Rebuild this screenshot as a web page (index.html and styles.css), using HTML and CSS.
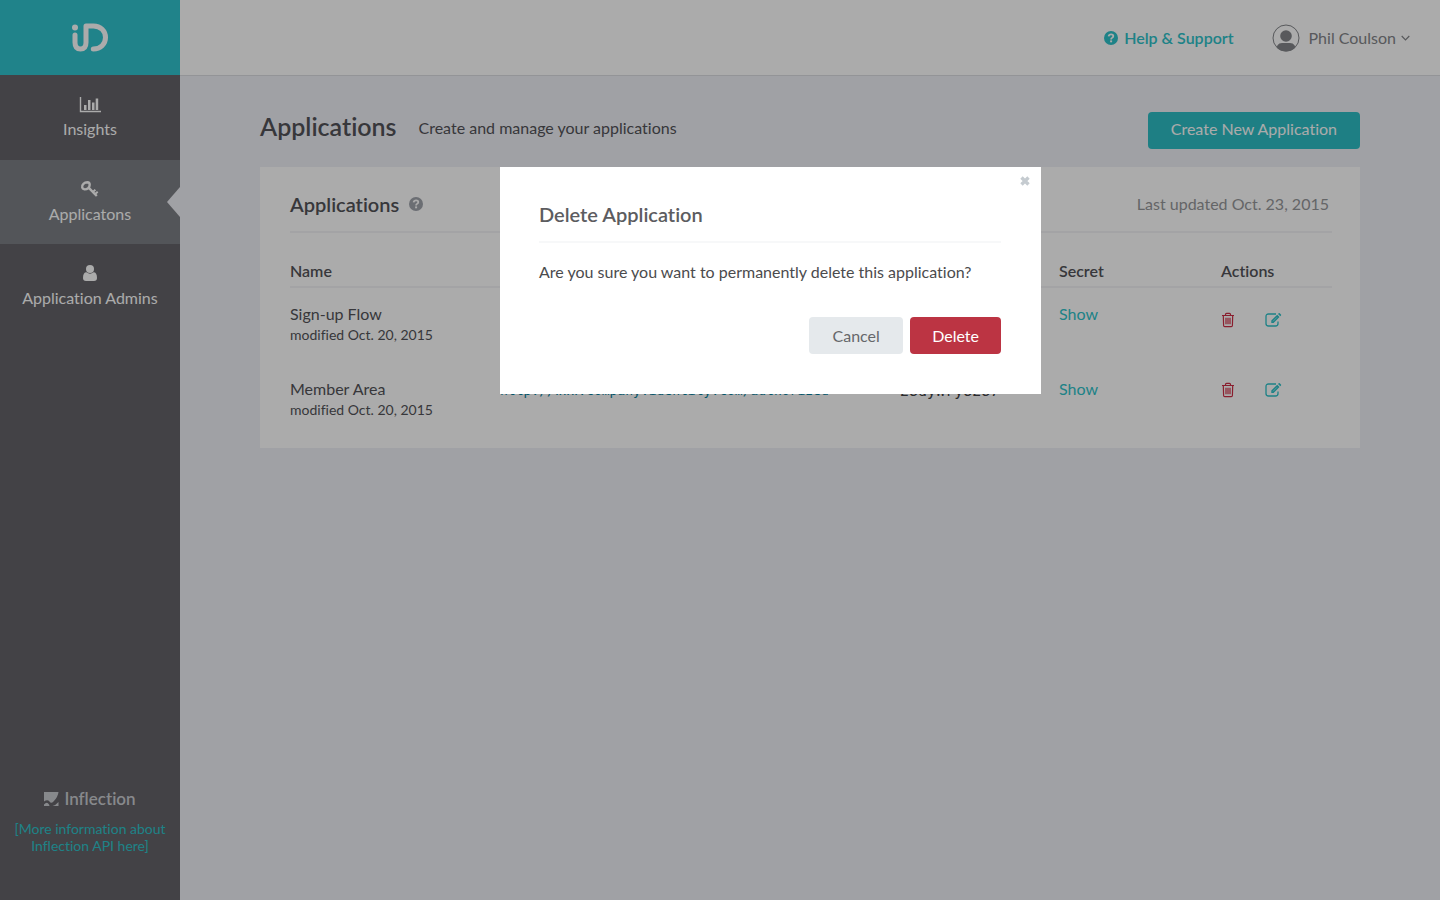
FILE: index.html
```html
<!DOCTYPE html>
<html lang="en">
<head>
<meta charset="utf-8">
<meta name="viewport" content="width=device-width, initial-scale=1">
<title>Applications</title>
<link rel="stylesheet" href="styles.css">
</head>
<body>
<svg class="defs" aria-hidden="true">
  <symbol id="trash" viewBox="0 0 14 16"><path d="M1 3.500h12M4.500 3.200V2.400Q4.500 1.300 5.500 1.300h3Q9.500 1.300 9.500 2.400v.8M2.300 3.700l.3 9.800q.1 1.200 1.100 1.200h6.600q1 0 1.100-1.200l.3-9.800M5 5.800v6.400M7 5.800v6.400M9 5.800v6.400" fill="none" stroke="currentColor" stroke-width="1.200"/></symbol>
  <symbol id="edit" viewBox="0 0 17 16"><path d="M11 2H3.500Q1 2 1 4.500v7Q1 14 3.500 14h7Q13 14 13 11.500V9.500" fill="none" stroke="currentColor" stroke-width="1.300"/><path d="M12.200 2.700l2.300 2.300-5.900 6H6.300V8.600zM13 1.900l.7-.7q.5-.4 1 0l1.300 1.300q.4.500 0 1l-.7.700z" fill="currentColor"/><path d="M8 9.300l4-4" stroke="#fff" stroke-width=".5"/></symbol>
  <symbol id="help" viewBox="0 0 14 14"><circle cx="7" cy="7" r="7" fill="currentColor"/><path d="M4.600 5.400Q5 3.300 7.100 3.300q2.200 0 2.200 1.800 0 1.100-1.100 1.700Q7.100 7.300 7.100 8.500" fill="none" stroke="#fff" stroke-width="1.800"/><path d="M6.100 9.400H8.100v1.900H6.100z" fill="#fff"/></symbol>
</svg>
<div class="app">
  <aside class="sidebar">
    <a class="brand" href="#" aria-label="iD home">
      <svg width="38" height="32" viewBox="0 0 38 32"><circle cx="4" cy="5.500" r="3" fill="#fff"/><path d="M4 13v7.500q0 6.500 5.500 6.500t5.500-6.500V4h7.500c7 0 12 5 12 11.500S29.500 27 22.300 27" fill="none" stroke="#fff" stroke-width="5" stroke-linecap="round" stroke-linejoin="round"/></svg>
    </a>
    <nav class="nav">
      <a class="nav-item" href="#">
        <svg width="22" height="18" viewBox="0 0 22 18"><path d="M1.500 2v14.500H22" fill="none" stroke="#fff" stroke-width="1.400"/><path d="M5 10h2.500v5H5zM9 5h2.500v10H9zM13 7.500h2.500V15H13zM16.700 3.500h2.500V15h-2.500z" fill="#fff"/></svg>
        <span>Insights</span>
      </a>
      <a class="nav-item active" href="#">
        <svg width="22" height="18" viewBox="0 0 22 18"><g fill="none" stroke="#fff"><path d="M3.200 7.500Q2.700 5.500 4.400 3.900 6 2.300 8.300 2.300q2.400.2 2.400 2.400 0 2.100-1.600 3.500Q7.500 9.500 5.400 9.300 3.500 9 3.200 7.500z" stroke-width="2.400"/><path d="M9.600 7.700l8.200 8.300" stroke-width="2.400"/><path d="M13.500 12.300l2.900-2.500m-.9 4.600l3.200-2.700" stroke-width="2"/></g></svg>
        <span>Applicatons</span>
      </a>
      <a class="nav-item" href="#">
        <svg width="22" height="18" viewBox="0 0 22 18"><circle cx="11" cy="5" r="4" fill="#fff"/><path d="M7.500 8.300Q4 8.300 4 14q0 3 3 3h8q3 0 3-3 0-5.700-3.500-5.700-3.500 2.800-7 0z" fill="#fff"/></svg>
        <span>Application Admins</span>
      </a>
    </nav>
    <footer class="sidebar-footer">
      <div class="inflection"><svg width="15" height="14" viewBox="0 0 15 14"><path d="M0 0h14.500Q14 5 9.500 9.500 7 12 5.500 9.500 3.500 7 0 9.500z M0 14v-1.500q3-3.500 5 0L5.500 14zM8.500 14q3.500-1 6-4v4z" fill="currentColor"/></svg><span>Inflection</span></div>
      <a href="#">[More information about Inflection API here]</a>
    </footer>
  </aside>
  <div class="main">
    <header class="topbar">
      <a class="help-link" href="#"><svg width="14" height="14"><use href="#help"/></svg>Help &amp; Support</a>
      <button class="user" type="button">
        <svg width="28" height="28" viewBox="0 0 28 28"><clipPath id="face"><circle cx="14" cy="14" r="13.500"/></clipPath><circle cx="14" cy="14" r="13" fill="none" stroke="currentColor"/><circle cx="14" cy="12" r="5.800" fill="currentColor"/><path clip-path="url(#face)" d="M4 28q0-9 6-9h8q6 0 6 9z" fill="currentColor"/></svg>
        <span>Phil Coulson</span>
        <svg class="caret" width="9" height="6" viewBox="0 0 9 6"><path d="M.7 1l3.800 3.800L8.300 1" fill="none" stroke="currentColor" stroke-width="1.200"/></svg>
      </button>
    </header>
    <main class="content">
      <div class="page-head">
        <h1>Applications</h1>
        <p>Create and manage your applications</p>
        <button class="btn create" type="button">Create New Application</button>
      </div>
      <section class="card">
        <div class="card-head">
          <h2>Applications</h2>
          <svg width="14" height="14" role="img" aria-label="Help"><use href="#help"/></svg>
          <span class="updated">Last updated Oct. 23, 2015</span>
        </div>
        <table>
          <colgroup><col class="c-name"><col class="c-url"><col class="c-key"><col class="c-secret"><col></colgroup>
          <thead><tr><th>Name</th><th></th><th></th><th>Secret</th><th>Actions</th></tr></thead>
          <tbody>
            <tr>
              <td>Sign-up Flow<small>modified Oct. 20, 2015</small></td>
              <td></td>
              <td></td>
              <td><a href="#">Show</a></td>
              <td><div class="actions low"><button class="icon danger" type="button" aria-label="Delete Sign-up Flow"><svg width="14" height="16"><use href="#trash"/></svg></button><button class="icon" type="button" aria-label="Edit Sign-up Flow"><svg width="17" height="16"><use href="#edit"/></svg></button></div></td>
            </tr>
            <tr>
              <td>Member Area<small>modified Oct. 20, 2015</small></td>
              <td><a class="code url" href="#">http://www.company.identity.com/authorized</a></td>
              <td><span class="code key">28dyWry8287</span></td>
              <td><a href="#">Show</a></td>
              <td><div class="actions"><button class="icon danger" type="button" aria-label="Delete Member Area"><svg width="14" height="16"><use href="#trash"/></svg></button><button class="icon" type="button" aria-label="Edit Member Area"><svg width="17" height="16"><use href="#edit"/></svg></button></div></td>
            </tr>
          </tbody>
        </table>
      </section>
    </main>
  </div>
</div>
<div class="overlay">
  <div class="modal" role="dialog" aria-modal="true" aria-labelledby="dialog-title">
    <button class="close" type="button" aria-label="Close"><svg width="10" height="10" viewBox="0 0 10 10"><path d="M1.500 1.500l7 7m0-7l-7 7" stroke="currentColor" stroke-width="3.400"/></svg></button>
    <h2 id="dialog-title">Delete Application</h2>
    <p>Are you sure you want to permanently delete this application?</p>
    <div class="modal-actions"><button class="btn cancel" type="button">Cancel</button><button class="btn delete" type="button">Delete</button></div>
  </div>
</div>
</body>
</html>
```
FILE: styles.css
```css
* { box-sizing: border-box; }
body {
  margin: 0;
  background: #eff0f6;
  color: #535358;
  font: 16px/20px Lato, "Open Sans", sans-serif;
  font-variant-ligatures: none;
}
h1, h2, p { margin: 0; font-weight: 600; }
p { font-weight: 400; }
a { color: #2ec2c9; text-decoration: none; }
button { font: inherit; color: inherit; border: 0; padding: 0; background: none; cursor: pointer; }
svg { display: block; flex: none; }
.defs { position: absolute; width: 0; height: 0; }

.app { display: flex; min-height: 100vh; }
.sidebar { width: 180px; flex: none; display: flex; flex-direction: column; background: #646369; }
.brand { height: 75px; display: flex; align-items: center; justify-content: center; background: #31c4ce; }
.nav-item {
  display: flex; flex-direction: column; align-items: center; gap: 6px;
  padding: 20px 0; height: 85px; color: #fff; position: relative;
}
.nav-item.active { height: 84px; background: #7d7f85; }
.nav-item.active::after {
  content: ""; position: absolute; right: 0; top: 27px;
  border: solid transparent; border-width: 15px 13px 15px 0; border-right-color: #eff0f6;
}
.sidebar-footer { margin-top: auto; padding: 0 10px 46px; text-align: center; font-size: 14px; line-height: 17px; }
.inflection { display: flex; align-items: center; justify-content: center; gap: 5px; margin-bottom: 11px; color: #caccd1; font-size: 17px; line-height: 20px; font-weight: 600; }

.main { flex: 1; min-width: 0; }
.topbar { height: 76px; display: flex; justify-content: flex-end; align-items: center; gap: 38px; padding-right: 30px; background: #fff; border-bottom: 1px solid #dcdde2; }
.help-link { display: flex; align-items: center; gap: 6px; font-weight: 600; }
.user { display: flex; align-items: center; gap: 9px; color: #838589; }
.caret { margin-left: -4px; }

.content { padding: 36px 80px; }
.page-head { display: flex; align-items: flex-start; margin-bottom: 18px; }
h1 { font-size: 25px; line-height: 28px; margin-right: 22px; }
.page-head p { line-height: 32px; }
.btn { height: 37px; border-radius: 4px; padding: 0 22px; }
.create { margin-left: auto; padding: 0 23px 4px; background: #2ebec5; color: #fff; }

.card { background: #fff; padding: 26px 28px 0 30px; min-height: 281px; }
.card-head { display: flex; align-items: center; gap: 10px; padding-bottom: 16px; border-bottom: 2px solid #f4f4f7; color: #a0a4ac; }
h2 { font-size: 20px; line-height: 22px; color: #535358; }
.updated { margin-left: auto; padding-right: 3px; color: #96979a; }
table { width: 100%; margin-top: 28px; border-collapse: collapse; table-layout: fixed; }
.c-name { width: 210px; }
.c-url { width: 400px; }
.c-key { width: 159px; }
.c-secret { width: 162px; }
th { text-align: left; font-weight: 600; padding: 0 0 5px; border-bottom: 2px solid #f4f4f7; }
td { height: 76px; padding: 16px 0 0; vertical-align: top; }
small { display: block; font-size: 14px; line-height: 22px; }
.code { display: block; font-family: "DejaVu Sans Mono", monospace; font-size: 13px; line-height: 24px; color: #404044; }
.url { color: #067f9e; }
.key { font-size: 15px; }
.actions { display: flex; gap: 30px; padding-top: 3px; }
.actions.low { padding-top: 8px; }
.icon { color: #2ec2c9; }
.danger { color: #ce2e45; }

.overlay { position: fixed; inset: 0; padding: 167px 20px 20px 500px; background: rgba(0, 0, 0, 0.33); }
.modal { position: relative; max-width: 541px; padding: 36px 40px 40px 39px; background: #fff; color: #4b4b4d; }
.modal h2 { color: #5c5c60; padding-bottom: 16px; border-bottom: 2px solid #f7f8f9; }
.modal p { margin: 19px 0 35px; }
.modal-actions { display: flex; justify-content: flex-end; gap: 7px; }
.cancel { min-width: 94px; background: #e5e9ec; color: #66676a; }
.delete { background: #bc3443; color: #fff; }
.close { position: absolute; top: 9px; right: 11px; color: #c5cbd0; }
```
